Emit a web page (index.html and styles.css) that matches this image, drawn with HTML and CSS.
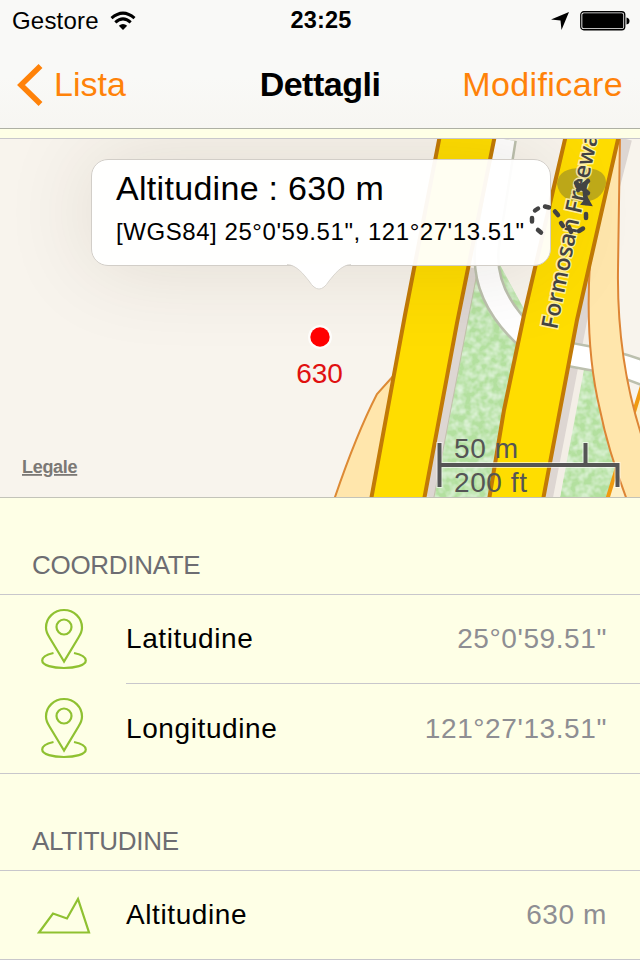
FILE: index.html
```html
<!DOCTYPE html>
<html lang="it">
<head>
  <meta charset="UTF-8">
  <meta name="viewport" content="width=device-width, initial-scale=1">
  <title>Dettagli</title>
  <link rel="stylesheet" href="styles.css">
</head>
<body>
  <header class="header">
    <div class="status">
      <div class="carrier">
        <span>Gestore</span>
        <svg width="26" height="20" viewBox="0 0 26 20" fill="none" stroke="#000" stroke-width="3">
          <path d="M1.5 7.2Q13-3 24.5 7.2"/>
          <path d="M5.3 11.4Q13 4.400 20.7 11.4"/>
          <path d="M13 19L8.8 14.8Q13 11.3 17.2 14.8Z" fill="#000" stroke="none"/>
        </svg>
      </div>
      <div class="clock">23:25</div>
      <div class="indicators">
        <svg width="18" height="18" viewBox="0 0 18 18"><path d="M18 0L10.5 18L9.5 8.5L0 7.5Z"/></svg>
        <svg width="50" height="20" viewBox="0 0 50 20">
          <rect x=".75" y=".75" width="44" height="18" rx="3" fill="#fff" stroke="#000" stroke-width="1.3"/>
          <rect x="2.3" y="2.3" width="41" height="15" rx="1.5"/>
          <path d="M46.5 6.500Q49.500 7 49.500 10Q49.500 13 46.500 13.500Z"/>
        </svg>
      </div>
    </div>
    <nav class="nav">
      <a class="back">
        <svg width="26" height="42" viewBox="0 0 26 42" fill="none" stroke="#ff8209" stroke-width="5.5"><path d="M23.500 2L4 21L23.500 40"/></svg>
        <span>Lista</span>
      </a>
      <h1>Dettagli</h1>
      <a class="edit">Modificare</a>
    </nav>
  </header>

  <div class="map">
    <svg class="roads" width="640" height="358" viewBox="0 139 640 358">
      <defs>
        <filter id="grass" x="0" y="0" width="1" height="1">
          <feTurbulence type="fractalNoise" baseFrequency=".14" numOctaves="2" seed="4"/>
          <feColorMatrix values="0 0 0 0 .82  0 0 0 0 .94  0 0 0 0 .79  0 1.500 0 0 -.5"/>
          <feComposite in2="SourceGraphic" operator="in" result="spots"/>
          <feMerge><feMergeNode in="SourceGraphic"/><feMergeNode in="spots"/></feMerge>
        </filter>
        <path id="street" d="M557 330Q572 253 581 213T604 110"/>
      </defs>
      <rect y="139" width="640" height="358" fill="#f8f4ed"/>

      <!-- grass -->
      <g fill="#b3e09f" filter="url(#grass)">
        <path d="M476 262L433 497H495L530 320L500 265Z"/>
        <path d="M585 352L560 497H620L600 352Z"/>
      </g>

      <!-- paths next to the freeway -->
      <path d="M473 268L430 497" stroke="#ddd6d2" stroke-width="9"/>
      <path d="M478 268L434 497" stroke="#c3c1ab" stroke-width="1"/>
      <path d="M590 300L553 497" stroke="#f3eee6" stroke-width="14"/>
      <path d="M626 139L585 300L547 497" stroke="#ddd6d2" stroke-width="12" fill="none"/>

      <!-- side streets -->
      <path d="M504 139L488 240C480 285 505 318 530 340C560 360 600 353 650 376" fill="none" stroke="#bcc0ae" stroke-width="26"/>
      <path d="M504 139L488 240C480 285 505 318 530 340C560 360 600 353 650 376" fill="none" stroke="#fff" stroke-width="21"/>

      <path d="M645 376L604 510H660V376Z" fill="#fdf0c8" stroke="#f09a10" stroke-width="4"/>
      <path d="M395 374L377 394Q356 435 334 500H380Z" fill="#ffe6ac" stroke="#dd8a35" stroke-width="2"/>
      <path d="M590 262C587 310 588 360 600 410Q608 450 627 500H660L643 440C628 395 617 340 618 270L620 135H605Z" fill="#ffe6ac" stroke="#dd8535" stroke-width="2"/>

      <!-- freeway -->
      <path d="M440 135L405 315L393 380L371 500H424L457 323L495 135Z" fill="#fd0" stroke="#c27a06" stroke-width="4"/>
      <path d="M566 135L524 315L504 410L489 500H543L577 320L619 135Z" fill="#fd0" stroke="#c27a06" stroke-width="4"/>
    </svg>

    <div class="callout">
      <div class="callout-title">Altitudine : 630 m</div>
      <div class="callout-text">[WGS84] 25°0'59.51", 121°27'13.51"</div>
      <svg class="callout-tail" width="64" height="27" viewBox="0 0 64 27"><path d="M0 0C10 1 17 11 22 17Q32 33 42 17C47 11 54 1 64 0Z" fill="#fff"/><path d="M0 .5C10 1 17 11 22 17Q32 33 42 17C47 11 54 1 64 .5" fill="none" stroke="#d2cec8" stroke-width=".8"/></svg>
    </div>

    <svg class="marks" width="640" height="358" viewBox="0 139 640 358">
      <path d="M557 184C558 172 567 168 582 168S606 172 606 183C604 196 594 202 581 202S559 196 557 184Z" fill="#80782f" fill-opacity=".5"/>
      <text class="street"><textPath href="#street" textLength="212">Formosan Freeway</textPath></text>
      <g stroke="#434343" stroke-width="4.5" stroke-linecap="round" fill="none">
        <path d="M538 230L541 232.500M532 218V221.500M535 210.500L538 208.500M545 206.500L549 207.500M555 211.500L558 215M561 223L563 226M569 227L571 232M579 231L583 228.500M586 214V218"/>
        <path d="M576 183L588 193M588 181L578 190M584 184L586 203"/>
        <path d="M582 204L591 205L587 198Z" fill="#434343" stroke-width="2"/>
      </g>

      <circle cx="320" cy="337" r="12" fill="#fff" opacity=".8"/>
      <circle cx="320" cy="337" r="9.7" fill="#f00"/>
      <text class="pin-label" x="319.500" y="383">630</text>

      <text class="legal" x="22" y="473">Legale</text>

      <path d="M439.500 442V488M439.500 465H617.500V488M585.500 465V442" fill="none" stroke="#fff" stroke-width="6" opacity=".6"/>
      <path d="M439.500 443V487M439.500 465H617.500V487M585.500 465V443" fill="none" stroke="#555" stroke-width="4"/>
      <text class="scale" x="454" y="458" textLength="64">50 m</text>
      <text class="scale" x="454" y="492" textLength="73">200 ft</text>
    </svg>
  </div>

  <section>
    <h2>COORDINATE</h2>
    <ul>
      <li>
        <svg class="icon" width="46" height="62" viewBox="0 0 46 62">
          <path d="M23 53.500L8.500 29.500Q5 24 5 19.500A18 17.500 0 0 1 41 19.500Q41 24 37.500 29.500Z"/>
          <circle cx="23" cy="19" r="7.500"/>
          <path d="M12.500 45Q1.200 47.500 1.200 52.500C1.200 62.500 44.800 62.500 44.800 52.500Q44.800 47.500 33 45"/>
        </svg>
        <div class="cell"><span>Latitudine</span><span class="value">25°0'59.51"</span></div>
      </li>
      <li>
        <svg class="icon" width="46" height="62" viewBox="0 0 46 62">
          <path d="M23 53.500L8.500 29.500Q5 24 5 19.500A18 17.500 0 0 1 41 19.500Q41 24 37.500 29.500Z"/>
          <circle cx="23" cy="19" r="7.500"/>
          <path d="M12.500 45Q1.200 47.500 1.200 52.500C1.200 62.500 44.800 62.500 44.800 52.500Q44.800 47.500 33 45"/>
        </svg>
        <div class="cell"><span>Longitudine</span><span class="value">121°27'13.51"</span></div>
      </li>
    </ul>
  </section>

  <section>
    <h2>ALTITUDINE</h2>
    <ul>
      <li>
        <svg class="icon" width="54" height="40" viewBox="0 0 54 40"><path d="M2 37.500L16 18.500L30 23.500L41 4L52 37.500Z"/></svg>
        <div class="cell"><span>Altitudine</span><span class="value">630 m</span></div>
      </li>
    </ul>
  </section>
</body>
</html>
```
FILE: styles.css
```css
body {
  margin: 0;
  height: 960px;
  overflow: hidden;
  background: #feffe6;
  color: #000;
  font-family: "Liberation Sans", Arial, sans-serif;
}

svg {
  display: block;
}

.header {
  height: 128px;
  background: linear-gradient(#f9f9f7 60%, #f7f6f2);
  border-bottom: 1px solid #aeb0a4;
}

.status {
  display: grid;
  grid-template-columns: 1fr auto 1fr;
  align-items: center;
  height: 41px;
  padding: 0 10px 0 12px;
  font-size: 24px;
}

.carrier, .indicators {
  display: flex;
  align-items: center;
}

.carrier {
  gap: 11px;
  letter-spacing: 0.2px;
}

.clock {
  font-weight: bold;
  font-size: 23.5px;
  letter-spacing: 0.2px;
}

.indicators {
  justify-content: flex-end;
  gap: 11px;
}

.nav {
  display: grid;
  grid-template-columns: 1fr auto 1fr;
  align-items: center;
  height: 87px;
  padding: 0 17px;
  font-size: 34px;
}

.back {
  display: flex;
  align-items: center;
  gap: 11px;
  color: #ff8209;
}

.edit {
  color: #ff8209;
  text-align: right;
  letter-spacing: 0.4px;
}

h1 {
  margin: 0;
  font-size: 34px;
  letter-spacing: -0.5px;
}

.map {
  position: relative;
  margin-top: 9px;
  height: 358px;
  overflow: hidden;
  border-top: 1px solid #c8c7cc;
  border-bottom: 1px solid #c3c3b9;
}

.callout {
  position: absolute;
  left: 91px;
  top: 20px;
  box-sizing: border-box;
  width: 460px;
  height: 107px;
  padding: 9px 24px;
  background: rgba(255, 255, 255, 0.95);
  border: 1px solid #d2cec8;
  border-radius: 17px;
  box-shadow: 0 0 90px rgba(60, 40, 20, 0.12);
  white-space: nowrap;
}

.callout-title {
  font-size: 34px;
  line-height: 38px;
  letter-spacing: 0.3px;
}

.callout-text {
  margin-top: 11px;
  font-size: 24px;
  line-height: 28px;
  letter-spacing: 0.56px;
}

.callout-tail {
  position: absolute;
  left: 195px;
  top: 104px;
}

.marks {
  position: absolute;
  left: 0;
  top: 0;
}

.street {
  font-family: "Open Sans", "Noto Sans", sans-serif;
  font-size: 23px;
  font-weight: 600;
  fill: #434343;
  stroke: rgba(255, 245, 200, 0.8);
  stroke-width: 3px;
  paint-order: stroke;
}

.pin-label {
  font-size: 28px;
  fill: #e01010;
  text-anchor: middle;
}

.legal {
  font-size: 18px;
  font-weight: bold;
  letter-spacing: -0.3px;
  fill: #7b7875;
  text-decoration: underline;
}

.scale {
  font-size: 28px;
  fill: #555;
}

h2 {
  margin: 0;
  padding: 52px 32px 14px;
  font-size: 26px;
  line-height: 30px;
  font-weight: normal;
  letter-spacing: -0.3px;
  color: #6d6d72;
}

ul {
  margin: 0;
  padding: 0;
  list-style: none;
  border-top: 1px solid #c8c7cc;
  border-bottom: 1px solid #c8c7cc;
}

li {
  display: grid;
  grid-template-columns: 126px 1fr;
  align-items: center;
  height: 88px;
  font-size: 28px;
}

li + li {
  height: 90px;
}

.icon {
  justify-self: center;
  margin-left: 2px;
  fill: none;
  stroke: #8fc131;
  stroke-width: 2.2;
}

.cell {
  display: flex;
  box-sizing: border-box;
  justify-content: space-between;
  align-items: center;
  height: 100%;
  padding-right: 33px;
  letter-spacing: 0.6px;
}

li + li .cell {
  border-top: 1px solid #c8c7cc;
}

.value {
  color: #8e8e93;
}
```
